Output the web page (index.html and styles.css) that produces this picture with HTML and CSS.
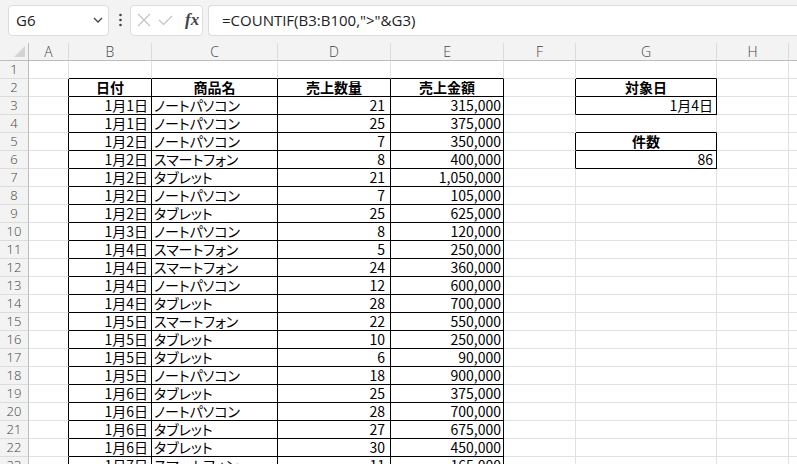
FILE: index.html
```html
<!DOCTYPE html>
<html lang="ja">
<head>
  <meta charset="UTF-8" />
  <title>COUNTIF</title>
  <link rel="stylesheet" href="styles.css">
</head>
<body>
  <div class="toolbar">
    <div class="namebox">
      <span>G6</span>
      <svg class="chevron" width="10" height="6" viewBox="0 0 10 6"><path d="M1 1l4 4 4-4" fill="none" stroke="#444" stroke-width="1.3"/></svg>
    </div>
    <svg class="dots" width="3" height="14" viewBox="0 0 3 14"><circle cx="1.5" cy="2" r="1.3"/><circle cx="1.5" cy="7" r="1.3"/><circle cx="1.5" cy="12" r="1.3"/></svg>
    <div class="fxbox">
      <svg width="14" height="14" viewBox="0 0 14 14"><path d="M1 1l12 12M13 1L1 13" stroke="#c4c4c4" stroke-width="1.2" fill="none"/></svg>
      <svg width="15" height="11" viewBox="0 0 15 11"><path d="M1 5l4.5 4.5L14 1" stroke="#c4c4c4" stroke-width="1.2" fill="none"/></svg>
      <span class="fx">fx</span>
    </div>
    <div class="formula">=COUNTIF(B3:B100,"&gt;"&amp;G3)</div>
  </div>

  <div class="sheet">
    <div class="row colhead">
      <div class="corner"><svg width="11" height="11" viewBox="0 0 11 11"><path d="M11 0v11H0z" fill="#d4d4d4"/></svg></div>
      <div>A</div><div>B</div><div>C</div><div>D</div><div>E</div><div>F</div><div>G</div><div>H</div><div></div>
    </div>
    <div class="row">
      <div class="rh">1</div><div></div><div class="top"></div><div class="top"></div><div class="top"></div><div class="top"></div><div></div><div class="top"></div><div></div><div></div>
    </div>
    <div class="row">
      <div class="rh">2</div><div class="edge"></div><div class="t hd">日付</div><div class="t hd">商品名</div><div class="t hd">売上数量</div><div class="t hd">売上金額</div><div class="edge"></div><div class="t hd">対象日</div><div></div><div></div>
    </div>
    <div class="row">
      <div class="rh">3</div><div class="edge"></div><div class="t dt">1月1日</div><div class="t nm">ノートパソコン</div><div class="t qty">21</div><div class="t amt">315,000</div><div class="edge"></div><div class="t dt">1月4日</div><div></div><div></div>
    </div>
    <div class="row">
      <div class="rh">4</div><div class="edge"></div><div class="t dt">1月1日</div><div class="t nm">ノートパソコン</div><div class="t qty">25</div><div class="t amt">375,000</div><div></div><div class="top"></div><div></div><div></div>
    </div>
    <div class="row">
      <div class="rh">5</div><div class="edge"></div><div class="t dt">1月2日</div><div class="t nm">ノートパソコン</div><div class="t qty">7</div><div class="t amt">350,000</div><div class="edge"></div><div class="t hd">件数</div><div></div><div></div>
    </div>
    <div class="row">
      <div class="rh">6</div><div class="edge"></div><div class="t dt">1月2日</div><div class="t nm">スマートフォン</div><div class="t qty">8</div><div class="t amt">400,000</div><div class="edge"></div><div class="t dt">86</div><div></div><div></div>
    </div>
    <div class="row">
      <div class="rh">7</div><div class="edge"></div><div class="t dt">1月2日</div><div class="t nm">タブレット</div><div class="t qty">21</div><div class="t amt">1,050,000</div><div></div><div></div><div></div><div></div>
    </div>
    <div class="row">
      <div class="rh">8</div><div class="edge"></div><div class="t dt">1月2日</div><div class="t nm">ノートパソコン</div><div class="t qty">7</div><div class="t amt">105,000</div><div></div><div></div><div></div><div></div>
    </div>
    <div class="row">
      <div class="rh">9</div><div class="edge"></div><div class="t dt">1月2日</div><div class="t nm">タブレット</div><div class="t qty">25</div><div class="t amt">625,000</div><div></div><div></div><div></div><div></div>
    </div>
    <div class="row">
      <div class="rh">10</div><div class="edge"></div><div class="t dt">1月3日</div><div class="t nm">ノートパソコン</div><div class="t qty">8</div><div class="t amt">120,000</div><div></div><div></div><div></div><div></div>
    </div>
    <div class="row">
      <div class="rh">11</div><div class="edge"></div><div class="t dt">1月4日</div><div class="t nm">スマートフォン</div><div class="t qty">5</div><div class="t amt">250,000</div><div></div><div></div><div></div><div></div>
    </div>
    <div class="row">
      <div class="rh">12</div><div class="edge"></div><div class="t dt">1月4日</div><div class="t nm">スマートフォン</div><div class="t qty">24</div><div class="t amt">360,000</div><div></div><div></div><div></div><div></div>
    </div>
    <div class="row">
      <div class="rh">13</div><div class="edge"></div><div class="t dt">1月4日</div><div class="t nm">ノートパソコン</div><div class="t qty">12</div><div class="t amt">600,000</div><div></div><div></div><div></div><div></div>
    </div>
    <div class="row">
      <div class="rh">14</div><div class="edge"></div><div class="t dt">1月4日</div><div class="t nm">タブレット</div><div class="t qty">28</div><div class="t amt">700,000</div><div></div><div></div><div></div><div></div>
    </div>
    <div class="row">
      <div class="rh">15</div><div class="edge"></div><div class="t dt">1月5日</div><div class="t nm">スマートフォン</div><div class="t qty">22</div><div class="t amt">550,000</div><div></div><div></div><div></div><div></div>
    </div>
    <div class="row">
      <div class="rh">16</div><div class="edge"></div><div class="t dt">1月5日</div><div class="t nm">タブレット</div><div class="t qty">10</div><div class="t amt">250,000</div><div></div><div></div><div></div><div></div>
    </div>
    <div class="row">
      <div class="rh">17</div><div class="edge"></div><div class="t dt">1月5日</div><div class="t nm">タブレット</div><div class="t qty">6</div><div class="t amt">90,000</div><div></div><div></div><div></div><div></div>
    </div>
    <div class="row">
      <div class="rh">18</div><div class="edge"></div><div class="t dt">1月5日</div><div class="t nm">ノートパソコン</div><div class="t qty">18</div><div class="t amt">900,000</div><div></div><div></div><div></div><div></div>
    </div>
    <div class="row">
      <div class="rh">19</div><div class="edge"></div><div class="t dt">1月6日</div><div class="t nm">タブレット</div><div class="t qty">25</div><div class="t amt">375,000</div><div></div><div></div><div></div><div></div>
    </div>
    <div class="row">
      <div class="rh">20</div><div class="edge"></div><div class="t dt">1月6日</div><div class="t nm">ノートパソコン</div><div class="t qty">28</div><div class="t amt">700,000</div><div></div><div></div><div></div><div></div>
    </div>
    <div class="row">
      <div class="rh">21</div><div class="edge"></div><div class="t dt">1月6日</div><div class="t nm">タブレット</div><div class="t qty">27</div><div class="t amt">675,000</div><div></div><div></div><div></div><div></div>
    </div>
    <div class="row">
      <div class="rh">22</div><div class="edge"></div><div class="t dt">1月6日</div><div class="t nm">タブレット</div><div class="t qty">30</div><div class="t amt">450,000</div><div></div><div></div><div></div><div></div>
    </div>
    <div class="row">
      <div class="rh">23</div><div class="edge"></div><div class="t dt">1月7日</div><div class="t nm">スマートフォン</div><div class="t qty">11</div><div class="t amt">165,000</div><div></div><div></div><div></div><div></div>
    </div>
  </div>
</body>
</html>
```

FILE: styles.css
```css
* {
  margin: 0;
  padding: 0;
  box-sizing: border-box;
}
body {
  width: 797px;
  height: 464px;
  overflow: hidden;
  background-color: #ffffff;
  font-family: 'Noto Sans CJK JP', sans-serif;
  color: #000000;
}

/* formula bar */
.toolbar {
  display: flex;
  align-items: center;
  height: 43px;
  padding: 0 0 3px 8px;
  background-color: #f3f3f3;
  font-family: 'Open Sans', 'Liberation Sans', sans-serif;
}
.namebox {
  display: flex;
  align-items: center;
  justify-content: space-between;
  width: 101px;
  height: 31px;
  padding: 0 5px 0 7px;
  background-color: #ffffff;
  border: 1px solid #dcdcdc;
  border-radius: 4px;
  font-size: 15px;
  color: #222;
}
.dots {
  fill: #444;
  margin: 0 8px 0 10px;
}
.fxbox {
  display: flex;
  align-items: center;
  gap: 7px;
  width: 73px;
  height: 31px;
  padding-left: 6px;
  background-color: #ffffff;
  border: 1px solid #dcdcdc;
  border-radius: 4px;
}
.fx {
  margin-left: 5px;
  font-family: 'Liberation Serif', serif;
  font-style: italic;
  font-weight: bold;
  font-size: 17px;
  color: #444;
}
.formula {
  flex: 1;
  height: 31px;
  margin-left: 5px;
  padding-left: 13px;
  line-height: 29px;
  background-color: #ffffff;
  border: 1px solid #dcdcdc;
  border-right: none;
  border-radius: 4px 0 0 4px;
  font-size: 15px;
  color: #222;
}

/* grid */
.sheet {
  width: 797px;
  overflow: hidden;
}
.row {
  display: grid;
  grid-template-columns: 29px 40px 83px 126px 113px 113px 72px 141px 72px 72px;
  height: 18px;
}
.row > div {
  height: 18px;
  border-right: 1px solid #e1e1e1;
  border-bottom: 1px solid #e1e1e1;
  font-size: 14px;
  line-height: 17px;
  white-space: nowrap;
}
.colhead > div {
  background-color: #f3f3f3;
  border-right-color: #dcdcdc;
  border-bottom-color: #bcbcbc;
  text-align: center;
  font-family: 'Open Sans', 'Liberation Sans', sans-serif;
  font-weight: 300;
  color: #444;
}
.colhead > .corner {
  display: flex;
  align-items: flex-end;
  justify-content: flex-end;
  padding: 0 3px 3px 0;
  border-right-color: #bcbcbc;
}
.row > .rh {
  background-color: #f3f3f3;
  border-right-color: #bcbcbc;
  border-bottom-color: #dcdcdc;
  text-align: center;
  font-family: 'Open Sans', 'Liberation Sans', sans-serif;
  font-weight: 300;
  font-size: 13px;
  color: #444;
}

/* bordered table cells */
.row > .t {
  border-right-color: #000;
  border-bottom-color: #000;
}
.row > .edge {
  border-right-color: #000;
}
.row > .top {
  border-bottom-color: #000;
}
.hd {
  text-align: center;
  font-weight: bold;
}
.dt {
  text-align: right;
  padding-right: 3px;
}
.nm {
  padding-left: 2px;
  font-feature-settings: "palt";
}
.qty {
  text-align: right;
  padding-right: 5px;
}
.amt {
  text-align: right;
  padding-right: 2px;
}
```
